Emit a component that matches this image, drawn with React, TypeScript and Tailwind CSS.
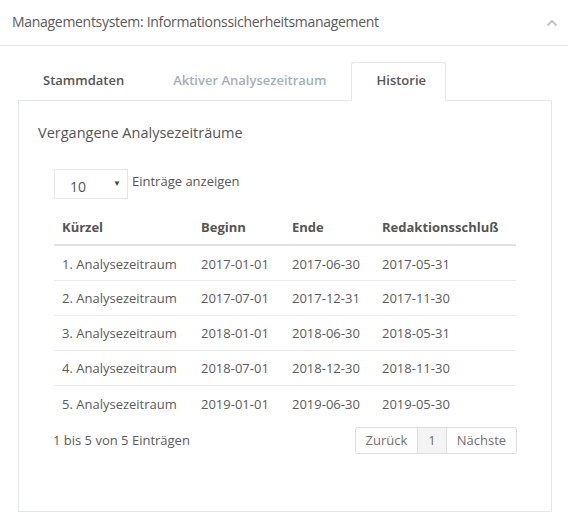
import React from "react";

const rows = [
  ["1. Analysezeitraum", "2017-01-01", "2017-06-30", "2017-05-31"],
  ["2. Analysezeitraum", "2017-07-01", "2017-12-31", "2017-11-30"],
  ["3. Analysezeitraum", "2018-01-01", "2018-06-30", "2018-05-31"],
  ["4. Analysezeitraum", "2018-07-01", "2018-12-30", "2018-11-30"],
  ["5. Analysezeitraum", "2019-01-01", "2019-06-30", "2019-05-30"],
];

export default function App() {
  return (
    <div className="w-[568px] h-[530px] bg-white text-[#595959]" style={{ fontFamily: '"Open Sans", sans-serif' }}>
      <div className="h-[46px] border-b border-[#e6e6e6] flex items-center justify-between pl-[12px] pr-[10px]">
        <span className="text-[14px] tracking-[-0.3px] text-[#5a5a5a] leading-none -mt-[2px]">Managementsystem: Informationssicherheitsmanagement</span>
        <svg width="12" height="8" viewBox="0 0 12 8" className="mt-[1px]">
          <polyline points="1.5,6.5 6,2 10.5,6.5" fill="none" stroke="#c4c4c4" strokeWidth="2" />
        </svg>
      </div>
      <div className="pl-[18px] pr-[16px] pt-[16px]">
        <div className="flex h-[38px] text-[13px]">
          <div className="pl-[25px] pr-[25px] flex items-center text-[#555] font-semibold">Stammdaten</div>
          <div className="pl-[24px] pr-[24px] flex items-center text-[#a5aec0] font-semibold">Aktiver Analysezeitraum</div>
          <div className="pl-[25px] pr-[19px] h-[39px] pb-[1px] flex items-center text-[#555] font-semibold border border-[#e3e6ea] border-b-white rounded-t-[3px] bg-white relative z-10">Historie</div>
        </div>
        <div className="border border-[#e3e6ea] h-[412px] pt-[22px]">
          <div className="pl-[19px] text-[14.5px] leading-[20px] text-[#555]">Vergangene Analysezeiträume</div>
          <div className="px-[35px] pt-[26px]">
            <div className="flex items-center text-[13px]">
              <div className="w-[74px] h-[30px] border border-[#e6e6e6] flex items-center justify-between pl-[15px] pr-[6px]">
                <span className="mt-[4px] text-[14px] text-[#555]">10</span>
                <span className="text-[8px] text-[#444] -mt-[2px]">▼</span>
              </div>
              <span className="ml-[4px] -mt-[4px] text-[#555]">Einträge anzeigen</span>
            </div>
            <table className="w-full mt-[10px] text-[13px] border-collapse">
              <thead>
                <tr className="border-b-2 border-[#e2e2e2] h-[36px]">
                  <th className="text-left font-bold px-[8px] pt-[2px] w-[139px] text-[#555]">Kürzel</th>
                  <th className="text-left font-bold px-[8px] pt-[2px] w-[91px] text-[#555]">Beginn</th>
                  <th className="text-left font-bold px-[8px] pt-[2px] w-[90px] text-[#555]">Ende</th>
                  <th className="text-left font-bold px-[8px] pt-[2px] text-[#555]">Redaktionsschluß</th>
                </tr>
              </thead>
              <tbody>
                {rows.map((r, i) => (
                  <tr key={i} className={(i > 0 ? "border-t border-[#ebebeb] " : "") + "h-[35px]"}>
                    {r.map((c, j) => (
                      <td key={j} className="px-[8px] pt-[3px] text-[#5a5a5a]">{c}</td>
                    ))}
                  </tr>
                ))}
              </tbody>
            </table>
            <div className="flex items-center justify-between mt-[7px] text-[13px]">
              <span className="text-[#5a5a5a] -ml-[1px]">1 bis 5 von 5 Einträgen</span>
              <div className="flex h-[27px] border border-[#dedede] rounded-[3px] text-[#707070] -mr-[1px]">
                <div className="w-[61px] flex items-center justify-center">Zurück</div>
                <div className="w-[30px] flex items-center justify-center bg-[#f4f4f4] border-l border-r border-[#dedede]">1</div>
                <div className="w-[69px] flex items-center justify-center">Nächste</div>
              </div>
            </div>
          </div>
        </div>
      </div>
    </div>
  );
}
